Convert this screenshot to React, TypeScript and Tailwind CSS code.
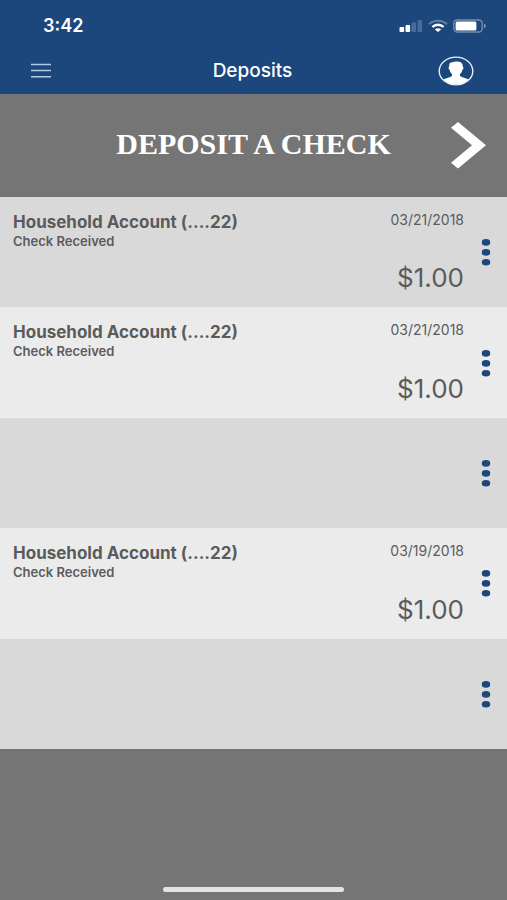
import React, { FC } from "react";

type Deposit = {
  id: number;
  account?: string;
  status?: string;
  date?: string;
  amount?: string;
};

const deposits: Deposit[] = [
  {
    id: 1,
    account: "Household Account (....22)",
    status: "Check Received",
    date: "03/21/2018",
    amount: "$1.00",
  },
  {
    id: 2,
    account: "Household Account (....22)",
    status: "Check Received",
    date: "03/21/2018",
    amount: "$1.00",
  },
  { id: 3 },
  {
    id: 4,
    account: "Household Account (....22)",
    status: "Check Received",
    date: "03/19/2018",
    amount: "$1.00",
  },
  { id: 5 },
];

const SignalIcon: FC = () => (
  <svg width="24" height="14" viewBox="0 0 24 14" fill="#fff" aria-hidden="true">
    <rect x="0.5" y="8" width="4.6" height="5" rx="1" />
    <rect x="6.5" y="6" width="4.6" height="7" rx="1" />
    <rect x="12.5" y="3.5" width="4.6" height="9.5" rx="1" opacity="0.2" />
    <rect x="18.5" y="1" width="4.6" height="12" rx="1" opacity="0.2" />
  </svg>
);

const WifiIcon: FC = () => (
  <svg width="20" height="14" viewBox="0 0 20 14" fill="none" aria-hidden="true">
    <path d="M1 5.2C6 0.7 14 0.7 19 5.2" stroke="#fff" strokeWidth="2" opacity="0.3" />
    <path d="M4.4 8C7.4 5 12.6 5 15.6 8" stroke="#fff" strokeWidth="2.4" />
    <path d="M6.8 10.4C8.7 8.9 11.3 8.9 13.2 10.4L10 13Z" fill="#fff" />
  </svg>
);

const BatteryIcon: FC = () => (
  <svg width="34" height="14" viewBox="0 0 34 14" fill="none" aria-hidden="true">
    <rect
      x="0.8"
      y="1"
      width="28.4"
      height="12"
      rx="3.5"
      stroke="#fff"
      strokeWidth="1.3"
      opacity="0.4"
    />
    <rect x="2.6" y="2.6" width="20.8" height="9" rx="1.5" fill="#fff" />
    <path d="M31 4.8c2.2.6 2.2 3.8 0 4.4z" fill="#fff" opacity="0.45" />
  </svg>
);

const MenuIcon: FC = () => (
  <svg width="20" height="16" viewBox="0 0 20 16" aria-hidden="true">
    <path d="M0 1.5H20M0 7.6H20M0 13.7H20" stroke="#b3cbea" strokeWidth="1.5" />
  </svg>
);

const ProfileIcon: FC = () => (
  <svg width="36" height="30" viewBox="0 0 36 30" aria-hidden="true">
    <path
      d="M5.5 23.5C8 21.8 12 21.8 14 20V18C12.6 17 12 15.6 11.7 14C10.4 13.6 10.2 11 11.2 10.6C10.8 7.4 12.4 6 14.6 6.3C17.5 5 25.4 5 24.8 10.6C25.8 11 25.6 13.6 24.3 14C24 15.6 23.4 17 22 18V20C24 21.8 28 21.8 30.5 23.5C27 27.5 22.5 28.8 18 28.8S9 27.500 5.5 23.5Z"
      fill="#fff"
    />
    <ellipse cx="18" cy="15" rx="16.8" ry="13.9" fill="none" stroke="#e6eef9" strokeWidth="1.4" />
  </svg>
);

const ChevronIcon: FC = () => (
  <svg width="36" height="48" viewBox="0 0 36 48" fill="#fff" aria-hidden="true">
    <path d="M7 0L35 23.3L7 46.5L0 40.8L21 23.3L0 5.7Z" />
  </svg>
);

const DotsIcon: FC = () => (
  <svg width="10" height="28" viewBox="0 0 10 28" fill="#1b477d" aria-hidden="true">
    <ellipse cx="5" cy="4.4" rx="4.2" ry="3.3" />
    <ellipse cx="5" cy="14.4" rx="4.2" ry="3.3" />
    <ellipse cx="5" cy="24.3" rx="4.2" ry="3.3" />
  </svg>
);

const DepositRow: FC<{ deposit: Deposit }> = ({ deposit }) => (
  <li className="flex odd:bg-[#d9d9d9] even:bg-[#ebebeb]">
    <div className="flex min-w-0 flex-grow flex-col pl-[13px] pt-[15px]">
      <span className="text-[17px] leading-5 font-bold">{deposit.account}</span>
      <span className="text-[13px] leading-[18px] font-semibold">{deposit.status}</span>
    </div>
    <div className="flex flex-shrink-0 flex-col items-end justify-between py-[13px]">
      <span className="text-sm leading-5">{deposit.date}</span>
      <span className="text-[26px] leading-8">{deposit.amount}</span>
    </div>
    <div className="flex w-[43px] flex-shrink-0 items-center justify-center">
      <button type="button" aria-label="Deposit options" className="p-1">
        <DotsIcon />
      </button>
    </div>
  </li>
);

export default function App() {
  return (
    <div className="flex min-h-screen flex-col bg-[#757575] font-['Inter','Liberation_Sans',sans-serif] text-[#5b5b5b]">
      <header className="bg-[#1b477d] text-white">
        <div className="flex h-[51px] items-center justify-between pl-[43px] pr-5">
          <span className="text-lg leading-6 font-semibold">3:42</span>
          <div className="flex items-center">
            <SignalIcon />
            <span className="mx-[5px]">
              <WifiIcon />
            </span>
            <BatteryIcon />
          </div>
        </div>
        <div className="grid h-[43px] grid-cols-3 items-center pl-[31px] pr-[33px] pb-[3px]">
          <button type="button" aria-label="Menu" className="justify-self-start">
            <MenuIcon />
          </button>
          <h1 className="text-center text-[19px] leading-6 font-medium">Deposits</h1>
          <button type="button" aria-label="Profile" className="justify-self-end">
            <ProfileIcon />
          </button>
        </div>
      </header>

      <main>
        <button
          type="button"
          className="flex h-[103px] w-full items-center pr-5 text-white"
        >
          <span className="flex-grow pl-14 pb-1 text-center font-['Liberation_Serif',serif] text-[30px] leading-8 font-bold">
            DEPOSIT A CHECK
          </span>
          <ChevronIcon />
        </button>
        <ul className="grid min-h-[552px] auto-rows-fr">
          {deposits.map((deposit) => (
            <DepositRow key={deposit.id} deposit={deposit} />
          ))}
        </ul>
      </main>

      <footer className="mt-auto flex justify-center pb-2">
        <div className="h-[5px] w-[181px] rounded-full bg-[#e4e4e4]" />
      </footer>
    </div>
  );
}
